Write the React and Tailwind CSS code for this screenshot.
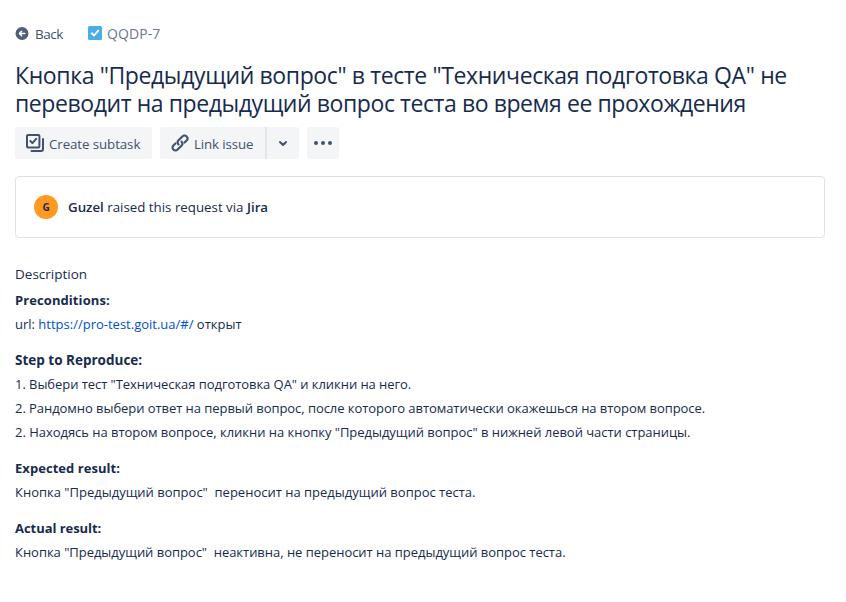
import React from "react";

function Line({ className = "", children }) {
  return <p className={"h-6 whitespace-pre leading-6 " + className}>{children}</p>;
}

function BackIcon() {
  return (
    <svg width="14" height="14" viewBox="0 0 14 14" className="block">
      <circle cx="7" cy="6.5" r="6.5" fill="#505f79" />
      <path d="M9.8 6.5H4.8M6.6 4.3L4.4 6.5l2.2 2.2" fill="none" stroke="#fff" strokeWidth="1.5" strokeLinecap="round" strokeLinejoin="round" />
    </svg>
  );
}

function TaskIcon() {
  return (
    <svg width="14" height="14" viewBox="0 0 14 14" className="mb-0.5 block">
      <rect width="14" height="14" rx="1.6" fill="#4bade8" />
      <path d="M3.8 7.3l2.3 2.2 4.1-4.8" fill="none" stroke="#fff" strokeWidth="1.9" strokeLinecap="round" strokeLinejoin="round" />
    </svg>
  );
}

function SubtaskIcon() {
  return (
    <svg width="18" height="18" viewBox="0 0 18 18" className="block" fill="none" stroke="#42526e" strokeWidth="2" strokeLinecap="round" strokeLinejoin="round">
      <rect x="1" y="1" width="12.4" height="12.4" rx="1" />
      <path d="M4.4 7l2 2.1 3.7-4.3" />
      <path d="M17 5v10c0 1.2-.8 2-2 2H5.5" />
    </svg>
  );
}

function LinkIcon() {
  return (
    <svg width="18" height="18" viewBox="0 0 18 18" className="block" fill="none" stroke="#42526e" strokeWidth="2.1" strokeLinecap="round" strokeLinejoin="round">
      <path d="M7.5 10.5C6.3 9.2 6.3 7.5 7.5 6.3l3.9-3.9c1.2-1.2 3-1.2 4.2 0s1.2 3 0 4.2l-2 2" />
      <path d="M10.5 7.5c1.2 1.3 1.2 3 0 4.2l-3.9 3.9c-1.2 1.2-3 1.2-4.2 0s-1.2-3 0-4.2l2-2" />
    </svg>
  );
}

export default function App() {
  return (
    <main className="h-[602px] w-[846px] overflow-hidden bg-white pl-[15px] pt-6 font-['Open_Sans','Noto_Sans',sans-serif] text-[#172b4d]">
      <nav className="flex h-5 items-center text-[14px] leading-5">
        <a className="flex w-[73px] items-center text-[#42526e]">
          <BackIcon />
          <span className="ml-[6px] text-[13.5px] tracking-[-0.5px]">Back</span>
        </a>
        <a className="flex items-center text-[#6b778c]">
          <TaskIcon />
          <span className="ml-[5px] tracking-[0.1px]">QQDP-7</span>
        </a>
      </nav>

      <h1 className="mt-[17px] whitespace-nowrap text-[23px] leading-7">
        <span className="block h-7 tracking-[-0.38px]">Кнопка "Предыдущий вопрос" в тесте "Техническая подготовка QA" не</span>
        <span className="block h-7 tracking-[-0.42px]">переводит на предыдущий вопрос теста во время ее прохождения</span>
      </h1>

      <div className="mt-[10px] flex h-8 gap-2 text-[13.3px] leading-8 text-[#42526e]">
        <button className="flex w-[137px] items-center whitespace-nowrap rounded-[3px] bg-[#f4f5f7] pl-[11px]">
          <SubtaskIcon />
          <span className="ml-[5px] mt-0.5 tracking-[-0.08px]">Create subtask</span>
        </button>
        <div className="flex w-[139px]">
          <button className="flex w-[105px] items-center whitespace-nowrap rounded-l-[3px] bg-[#f4f5f7] pl-[11px]">
            <LinkIcon />
            <span className="ml-[5px] mt-0.5 tracking-[-0.12px]">Link issue</span>
          </button>
          <button className="flex flex-1 items-center justify-center rounded-r-[3px] border-l-2 border-[#e3e5e9] bg-[#f4f5f7]">
            <svg width="10" height="7" viewBox="0 0 10 7" fill="none" stroke="#42526e" strokeWidth="2" strokeLinecap="round" strokeLinejoin="round">
              <path d="M2 2l3 3 3-3" />
            </svg>
          </button>
        </div>
        <button className="flex w-8 items-center justify-center rounded-[3px] bg-[#f4f5f7]">
          <svg width="18" height="4" viewBox="0 0 18 4" fill="#42526e">
            <circle cx="2" cy="2" r="2" />
            <circle cx="9" cy="2" r="2" />
            <circle cx="16" cy="2" r="2" />
          </svg>
        </button>
      </div>

      <section className="mt-[17px] flex h-[62px] w-[810px] items-center rounded-[4px] border border-[#dfe1e6] pl-[18px] text-[13.3px]">
        <span className="flex size-6 items-center justify-center rounded-full bg-[#ff991f] text-[10px] font-bold">G</span>
        <p className="ml-[10px] whitespace-nowrap leading-5">
          <span className="font-semibold">Guzel</span> raised this request via <span className="font-semibold">Jira</span>
        </p>
      </section>

      <section className="mt-6 text-[13px]">
        <Line className="text-[13.5px] font-medium">Description</Line>
        <div className="mt-0.5">
          <Line className="font-bold tracking-[0.08px]">Preconditions:</Line>
          <Line>url: <a className="text-[#0052cc]">https://pro-test.goit.ua/#/</a> открыт</Line>
        </div>
        <div className="mt-3">
          <Line className="text-[13.5px] font-bold">Step to Reproduce:</Line>
          <Line className="tracking-[-0.055px]">1. Выбери тест "Техническая подготовка QA" и кликни на него.</Line>
          <Line className="tracking-[-0.057px]">2. Рандомно выбери ответ на первый вопрос, после которого автоматически окажешься на втором вопросе.</Line>
          <Line className="tracking-[-0.03px]">2. Находясь на втором вопросе, кликни на кнопку "Предыдущий вопрос" в нижней левой части страницы.</Line>
        </div>
        <div className="mt-3">
          <Line className="font-bold tracking-[0.05px]">Expected result:</Line>
          <Line>Кнопка "Предыдущий вопрос"  переносит на предыдущий вопрос теста.</Line>
        </div>
        <div className="mt-3">
          <Line className="font-bold tracking-[-0.05px]">Actual result:</Line>
          <Line className="tracking-[-0.03px]">Кнопка "Предыдущий вопрос"  неактивна, не переносит на предыдущий вопрос теста.</Line>
        </div>
      </section>
    </main>
  );
}
